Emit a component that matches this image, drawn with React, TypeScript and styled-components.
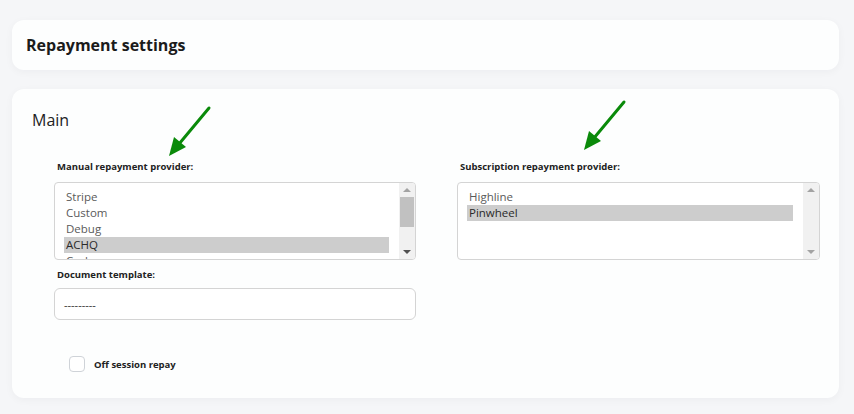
import React from "react";
import styled, { createGlobalStyle } from "styled-components";

const GlobalStyle = createGlobalStyle`
  html, body {
    margin: 0;
    padding: 0;
    background: #f5f6f8;
    font-family: "Open Sans", "Noto Sans", sans-serif;
    color: #1f1f1f;
  }
`;

const Page = styled.div`
  width: 854px;
  height: 414px;
  box-sizing: border-box;
  padding: 20px 15px 0 12px;
  display: flex;
  flex-direction: column;
  gap: 19px;
`;

const Card = styled.div`
  position: relative;
  background: #fdfefe;
  border-radius: 12px;
  box-shadow: 0 2px 8px rgba(20, 30, 50, 0.04);
`;

const HeaderCard = styled(Card)`
  height: 50px;
  display: flex;
  align-items: center;
  padding: 0 14px;
`;

const PageTitle = styled.h1`
  margin: 0;
  font-size: 16px;
  font-weight: 700;
  color: #1b1b1b;
`;

const MainCard = styled(Card)`
  height: 309px;
  box-sizing: border-box;
  padding: 21px 19px 0 20px;
`;

const SectionTitle = styled.h2`
  margin: 0;
  font-size: 16px;
  line-height: 20px;
  font-weight: 400;
  color: #222;
`;

const Form = styled.div`
  margin: 30px 0 0 22px;
  display: grid;
  grid-template-columns: 362px 363px;
  column-gap: 41px;
  align-items: start;
`;

const Column = styled.div`
  display: flex;
  flex-direction: column;
`;

const Label = styled.label`
  display: block;
  font-size: 9.5px;
  line-height: 14px;
  font-weight: 700;
  color: #222;
  padding-left: 3px;
  margin-bottom: 8px;
`;

const ListBox = styled.div`
  height: 78px;
  box-sizing: border-box;
  border: 1px solid #d4d4d4;
  border-radius: 4px;
  background: #fff;
  display: flex;
  overflow: hidden;
`;

const Options = styled.div`
  flex: 1;
  padding: 6px 10px 0 9px;
`;

const Option = styled.div<{ $selected?: boolean }>`
  height: 16px;
  line-height: 16px;
  font-size: 11.5px;
  padding-left: 2px;
  color: ${(p) => (p.$selected ? "#2a2a2a" : "#5a5a5a")};
  background: ${(p) => (p.$selected ? "#cdcdcd" : "transparent")};
`;

const ScrollTrack = styled.div`
  width: 16px;
  background: #f1f1f1;
  display: flex;
  flex-direction: column;
  align-items: center;
  justify-content: space-between;
  padding: 5px 0;
  box-sizing: border-box;
`;

const ScrollBody = styled.div`
  flex: 1;
  width: 100%;
  padding: 5px 1px;
  box-sizing: border-box;
`;

const Thumb = styled.div`
  width: 100%;
  height: 30px;
  background: #c1c1c1;
`;

const Arrow = styled.div<{ $down?: boolean; $dark?: boolean }>`
  width: 0;
  height: 0;
  border-left: 4px solid transparent;
  border-right: 4px solid transparent;
  ${(p) =>
    p.$down
      ? `border-top: 4px solid ${p.$dark ? "#505050" : "#a3a3a3"};`
      : `border-bottom: 4px solid ${p.$dark ? "#505050" : "#a3a3a3"};`}
`;

const Input = styled.div`
  margin-top: -2px;
  height: 32px;
  box-sizing: border-box;
  border: 1px solid #d4d4d4;
  border-radius: 6px;
  background: #fff;
  display: flex;
  align-items: center;
  padding-left: 9px;
  font-size: 11px;
  color: #333;
`;

const FieldGap = styled.div`
  height: 8px;
`;

const CheckRow = styled.div`
  margin: 36px 0 0 15px;
  display: flex;
  align-items: center;
  gap: 9px;
`;

const Checkbox = styled.span`
  width: 16px;
  height: 16px;
  box-sizing: border-box;
  border: 1px solid #cfd3d8;
  border-radius: 4px;
  background: #fff;
`;

const CheckLabel = styled.span`
  font-size: 9.5px;
  font-weight: 700;
  color: #222;
`;

const Pointer = styled.svg`
  position: absolute;
  pointer-events: none;
`;

const GreenArrow: React.FC<{ left: number; top: number }> = ({ left, top }) => (
  <Pointer width="48" height="56" viewBox="0 0 48 56" style={{ left, top }}>
    <line x1="43" y1="4" x2="13" y2="40" stroke="#0a8a0a" strokeWidth="3" strokeLinecap="round" />
    <polygon points="3,52 8,33 20,43" fill="#0a8a0a" />
  </Pointer>
);

const Scrollbar: React.FC<{ thumb?: boolean }> = ({ thumb }) => (
  <ScrollTrack>
    <Arrow />
    <ScrollBody>{thumb && <Thumb />}</ScrollBody>
    <Arrow $down $dark={thumb} />
  </ScrollTrack>
);

const App: React.FC = () => {
  return (
    <>
      <GlobalStyle />
      <Page>
        <HeaderCard>
          <PageTitle>Repayment settings</PageTitle>
        </HeaderCard>
        <MainCard>
          <SectionTitle>Main</SectionTitle>
          <GreenArrow left={154} top={15} />
          <GreenArrow left={569} top={9} />
          <Form>
            <Column>
              <Label>Manual repayment provider:</Label>
              <ListBox>
                <Options>
                  <Option>Stripe</Option>
                  <Option>Custom</Option>
                  <Option>Debug</Option>
                  <Option $selected>ACHQ</Option>
                  <Option>Cash</Option>
                </Options>
                <Scrollbar thumb />
              </ListBox>
              <FieldGap />
              <Label>Document template:</Label>
              <Input>---------</Input>
              <CheckRow>
                <Checkbox />
                <CheckLabel>Off session repay</CheckLabel>
              </CheckRow>
            </Column>
            <Column>
              <Label>Subscription repayment provider:</Label>
              <ListBox>
                <Options>
                  <Option>Highline</Option>
                  <Option $selected>Pinwheel</Option>
                </Options>
                <Scrollbar />
              </ListBox>
            </Column>
          </Form>
        </MainCard>
      </Page>
    </>
  );
};

export default App;
